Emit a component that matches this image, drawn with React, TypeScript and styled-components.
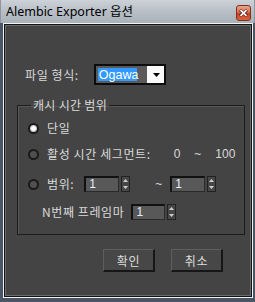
import React from 'react';
import styled, { createGlobalStyle } from 'styled-components';

const GlobalStyle = createGlobalStyle`
  html, body {
    margin: 0;
    padding: 0;
    background: #4a5664;
  }
  body {
    font-family: "Noto Sans CJK KR", "Noto Sans", sans-serif;
  }
`;

const Spinner: React.FC<{ value: string; width?: number }> = ({ value, width = 35 }) => (
  <SpinWrap>
    <SpinField $w={width}>{value}</SpinField>
    <SpinArrows>
      <ArrowHalf>
        <svg width="5" height="3" viewBox="0 0 5 3"><path d="M2.5 0L5 3H0z" fill="#cfcfcf" /></svg>
      </ArrowHalf>
      <ArrowHalf>
        <svg width="5" height="3" viewBox="0 0 5 3"><path d="M0 0H5L2.5 3z" fill="#cfcfcf" /></svg>
      </ArrowHalf>
    </SpinArrows>
  </SpinWrap>
);

export default function App() {
  return (
    <>
      <GlobalStyle />
      <Window>
        <TitleBar>
          <TitleText>Alembic Exporter 옵션</TitleText>
          <CloseButton>
            <svg width="9" height="8" viewBox="0 0 9 8">
              <path d="M1 1L8 7M8 1L1 7" stroke="#5a2a20" strokeWidth="3" />
              <path d="M1.5 1.2L7.5 6.8M7.5 1.2L1.5 6.8" stroke="#fff" strokeWidth="1.6" />
            </svg>
          </CloseButton>
        </TitleBar>
        <Frame>
          <Panel>
            <FormatRow>
              <Label>파일 형식:</Label>
              <Dropdown>
                <Selected>Ogawa</Selected>
                <DropGap />
                <DropButton>
                  <svg width="7" height="4" viewBox="0 0 7 4"><path d="M0 0H7L3.5 4z" fill="#000" /></svg>
                </DropButton>
              </Dropdown>
            </FormatRow>

            <Group>
              <Legend>캐시 시간 범위</Legend>
              <Row>
                <Radio $checked />
                <Label>단일</Label>
              </Row>
              <Row $gap={4}>
                <Radio />
                <Label>활성 시간 세그먼트:</Label>
                <Value $ml={23}>0</Value>
                <Value $ml={14}>~</Value>
                <Value $ml={14}>100</Value>
              </Row>
              <Row $gap={8}>
                <Radio />
                <Label>범위:</Label>
                <Spacer $w={10} />
                <Spinner value="1" />
                <Value $ml={25}>~</Value>
                <Spacer $w={8} />
                <Spinner value="1" />
              </Row>
              <Row $gap={6} $indent={14}>
                <Label>N번째 프레임마</Label>
                <Spacer $w={7} />
                <Spinner value="1" width={34} />
              </Row>
            </Group>

            <ButtonRow>
              <Button>확인</Button>
              <Button>취소</Button>
            </ButtonRow>
          </Panel>
        </Frame>
      </Window>
    </>
  );
}

const Window = styled.div`
  width: 255px;
  height: 302px;
  display: flex;
  flex-direction: column;
  background: #4a5664;
`;

const TitleBar = styled.div`
  height: 23px;
  flex-shrink: 0;
  display: flex;
  align-items: center;
  justify-content: space-between;
  padding: 0 4px 0 6px;
  background: linear-gradient(#ccd2d8 0%, #b9c0c7 45%, #a9b1b9 100%);
  box-shadow: inset 1px 0 0 #8e979f, inset -1px 0 0 #8e979f;
`;

const TitleText = styled.span`
  font-family: "Noto Sans", "Noto Sans CJK KR", sans-serif;
  font-size: 12.5px;
  line-height: 14px;
  color: #000;
`;

const CloseButton = styled.div`
  width: 15px;
  height: 16px;
  margin-top: 2px;
  box-sizing: border-box;
  display: flex;
  align-items: center;
  justify-content: center;
  border: 1px solid #7a3322;
  border-radius: 3px;
  background: linear-gradient(#eba58f 0%, #dc6a4c 48%, #c8401f 52%, #d9643e 100%);
`;

const Frame = styled.div`
  flex: 1;
  display: flex;
  padding: 0 2px 4px 3px;
`;

const Panel = styled.div`
  flex: 1;
  display: flex;
  flex-direction: column;
  background: #444444;
  border: 1px solid #f2f2f2;
  box-shadow: inset 0 0 0 1px #141414, inset 0 0 0 2px #6c6c6c;
  padding: 40px 7px 0 13px;
`;

const FormatRow = styled.div`
  display: flex;
  align-items: center;
  gap: 15px;
  padding-left: 8px;
  height: 21px;
`;

const Label = styled.span`
  font-size: 12px;
  line-height: 14px;
  letter-spacing: 0.6px;
  color: #dadada;
  white-space: nowrap;
`;

const Dropdown = styled.div`
  width: 72px;
  height: 21px;
  box-sizing: border-box;
  display: flex;
  align-items: stretch;
  border: 2px solid #0c0c0c;
  padding: 2px 0 2px 2px;
  background: #5a5a5a;
`;

const Selected = styled.span`
  width: 38px;
  display: flex;
  align-items: center;
  background: #3399ff;
  color: #fff;
  font-family: "Liberation Sans", Arial, sans-serif;
  font-size: 12.5px;
  padding-left: 1px;
`;

const DropGap = styled.span`
  width: 10px;
`;

const DropButton = styled.span`
  flex: 1;
  margin: -2px 0;
  display: flex;
  align-items: center;
  justify-content: flex-end;
  padding-right: 4px;
  background: #fafafa;
`;

const Group = styled.fieldset`
  margin: 13px 0 0;
  padding: 5px 0 11px 10px;
  border: 1px solid #1c1c1c;
  box-shadow: inset 1px 1px 0 #575757;
`;

const Legend = styled.legend`
  padding: 0 2px;
  margin-left: 3px;
  font-size: 12px;
  line-height: 14px;
  letter-spacing: 0.3px;
  color: #dadada;
`;

const Row = styled.div<{ $gap?: number; $indent?: number }>`
  display: flex;
  align-items: center;
  height: 22px;
  margin-top: ${p => p.$gap ?? 0}px;
  padding-left: ${p => p.$indent ?? 0}px;
`;

const Radio = styled.span<{ $checked?: boolean }>`
  width: 11px;
  height: 11px;
  box-sizing: border-box;
  border-radius: 50%;
  margin-right: 8px;
  border: 2px solid #1a1a1a;
  background: ${p => (p.$checked ? 'radial-gradient(circle, #ffffff 0 2px, #cfcfcf 2.5px 3.5px)' : '#505050')};
`;

const Value = styled.span<{ $ml: number }>`
  margin-left: ${p => p.$ml}px;
  font-family: "Liberation Sans", Arial, sans-serif;
  font-size: 12px;
  line-height: 14px;
  color: #dadada;
`;

const Spacer = styled.span<{ $w: number }>`
  width: ${p => p.$w}px;
`;

const SpinWrap = styled.div`
  display: flex;
  gap: 2px;
  height: 16px;
`;

const SpinField = styled.div<{ $w: number }>`
  width: ${p => p.$w}px;
  box-sizing: border-box;
  background: #585858;
  border-top: 2px solid #111;
  border-left: 2px solid #111;
  border-bottom: 1px solid #2a2a2a;
  border-right: 1px solid #2a2a2a;
  padding-left: 3px;
  font-family: "Liberation Sans", Arial, sans-serif;
  font-size: 12px;
  line-height: 13px;
  color: #e6ecff;
`;

const SpinArrows = styled.div`
  width: 9px;
  box-sizing: border-box;
  display: flex;
  flex-direction: column;
  background: #474747;
  border: 1px solid #222;
`;

const ArrowHalf = styled.span`
  flex: 1;
  display: flex;
  align-items: center;
  justify-content: center;
`;

const ButtonRow = styled.div`
  display: flex;
  gap: 16px;
  margin-top: 14px;
  padding-left: 86px;
`;

const Button = styled.div`
  width: 52px;
  height: 23px;
  box-sizing: border-box;
  display: flex;
  align-items: center;
  justify-content: center;
  background: #474747;
  border-top: 1px solid #5e5e5e;
  border-left: 1px solid #5e5e5e;
  border-right: 2px solid #161616;
  border-bottom: 2px solid #161616;
  font-size: 12px;
  letter-spacing: 0.6px;
  color: #dcdcdc;
`;
